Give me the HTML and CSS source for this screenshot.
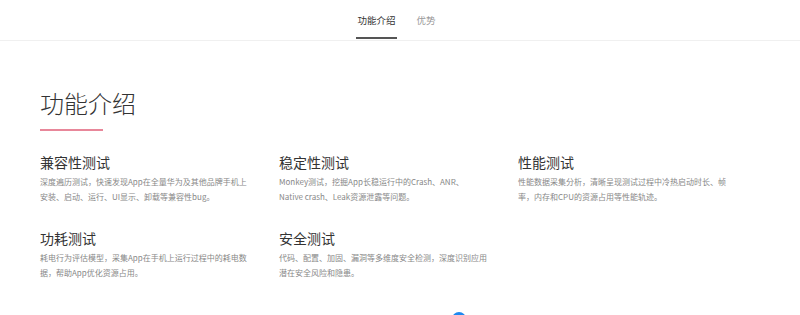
FILE: index.html
```html
<!DOCTYPE html>
<html lang="zh-CN">
<head>
<meta charset="utf-8">
<title>功能介绍</title>
<link rel="stylesheet" href="styles.css">
</head>
<body>
<header class="header">
  <nav class="nav">
    <a class="nav-item active">功能介绍</a>
    <a class="nav-item">优势</a>
  </nav>
</header>
<main class="main">
  <h1 class="section-title">功能介绍</h1>
  <div class="title-bar"></div>
  <div class="grid">
    <div class="card">
      <h3 class="card-title">兼容性测试</h3>
      <p class="card-desc">深度遍历测试，快速发现App在全量华为及其他品牌手机上安装、启动、运行、UI显示、卸载等兼容性bug。</p>
    </div>
    <div class="card">
      <h3 class="card-title">稳定性测试</h3>
      <p class="card-desc">Monkey测试，挖掘App长稳运行中的Crash、ANR、Native&nbsp;crash、Leak资源泄露等问题。</p>
    </div>
    <div class="card">
      <h3 class="card-title">性能测试</h3>
      <p class="card-desc">性能数据采集分析，清晰呈现测试过程中冷热启动时长、帧率，内存和CPU的资源占用等性能轨迹。</p>
    </div>
    <div class="card">
      <h3 class="card-title">功耗测试</h3>
      <p class="card-desc">耗电行为评估模型，采集App在手机上运行过程中的耗电数据，帮助App优化资源占用。</p>
    </div>
    <div class="card">
      <h3 class="card-title">安全测试</h3>
      <p class="card-desc">代码、配置、加固、漏洞等多维度安全检测，深度识别应用潜在安全风险和隐患。</p>
    </div>
  </div>
</main>
<div class="float-btn"></div>
</body>
</html>
```

FILE: styles.css
```css
html, body {
  margin: 0;
  padding: 0;
  background: #fff;
  overflow: hidden;
}
body {
  font-family: "Noto Sans CJK SC", "Microsoft YaHei", sans-serif;
  color: #333;
  height: 315px;
  position: relative;
}
.header {
  height: 40px;
  border-bottom: 1px solid #f0f0f0;
}
.nav {
  display: flex;
  justify-content: center;
  gap: 19px;
  height: 40px;
  padding-right: 7px;
}
.nav-item {
  box-sizing: border-box;
  height: 39px;
  display: flex;
  align-items: center;
  font-size: 9.5px;
  color: #999;
  padding: 3px 1px 0;
  border-bottom: 2px solid transparent;
}
.nav-item.active {
  color: #333;
  border-bottom-color: #555;
}
.main {
  padding: 0 40px;
}
.section-title {
  margin: 47px 0 0;
  font-size: 24px;
  font-weight: 300;
  line-height: 30px;
  color: #333;
}
.title-bar {
  width: 63px;
  height: 2px;
  background: #e8879a;
  margin-top: 11px;
}
.grid {
  display: grid;
  grid-template-columns: repeat(3, 239px);
  row-gap: 25px;
  margin-top: 22px;
}
.card {
  width: 210px;
}
.card-title {
  margin: 0;
  font-size: 14px;
  font-weight: 400;
  line-height: 18px;
  color: #333;
}
.card-desc {
  margin: 3px 0 0;
  font-size: 8px;
  line-height: 15px;
  color: #888;
}
.float-btn {
  position: absolute;
  left: 452px;
  top: 312px;
  width: 14px;
  height: 14px;
  border-radius: 50%;
  background: #1e88f0;
}
```
